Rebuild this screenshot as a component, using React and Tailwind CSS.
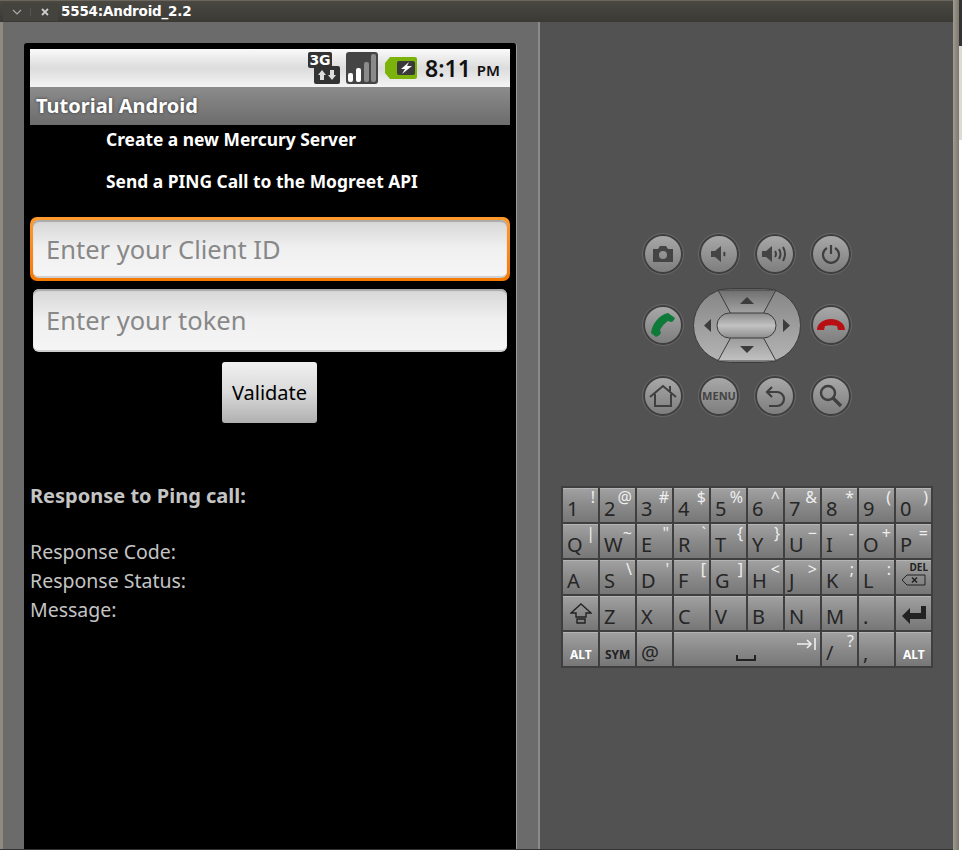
import React from 'react';

const row1 = [
  ['1', '!'], ['2', '@'], ['3', '#'], ['4', '$'], ['5', '%'], ['6', '^'], ['7', '&'], ['8', '*'], ['9', '('], ['0', ')'],
];
const row2 = [
  ['Q', '|'], ['W', '~'], ['E', '"'], ['R', '`'], ['T', '{'], ['Y', '}'], ['U', '−'], ['I', '-'], ['O', '+'], ['P', '='],
];
const row3 = [
  ['A', ''], ['S', '\\'], ['D', "'"], ['F', '['], ['G', ']'], ['H', '<'], ['J', '>'], ['K', ';'], ['L', ':'],
];
const row4 = ['Z', 'X', 'C', 'V', 'B', 'N', 'M', '.'];

const Key = ({ main, alt, className = '', children }) => (
  <div className={`relative h-[34px] bg-gradient-to-b from-[#a0a0a0] via-[#8a8a8a] to-[#777] border-t border-[#b5b5b5] font-['Noto_Sans',sans-serif] text-[#252525] ${className}`}>
    {main && <span className="absolute left-[4px] bottom-[1px] text-[20px] leading-[24px]">{main}</span>}
    {alt && <span className="absolute right-[3px] top-[-2px] text-[16px] leading-[20px] text-[#eee]">{alt}</span>}
    {children}
  </div>
);

const Round = ({ children }) => (
  <div className="w-10 h-10 rounded-full bg-gradient-to-b from-[#a8a8a8] to-[#7e7e7e] border-2 border-[#3f3f3f] outline outline-1 outline-[#686868] flex items-center justify-center">
    {children}
  </div>
);

const Field = ({ focus, label }) => (
  <div className={focus ? 'rounded-[7px] p-[3px] bg-gradient-to-b from-[#ff9a2e] to-[#f57900]' : 'p-[3px]'}>
    <div className={`${focus ? 'h-[58px]' : 'h-[63px]'} rounded-[6px] bg-gradient-to-b from-[#d6d6d6] via-[#f0f0f0] to-[#f5f5f5] border-b-2 border-[#cfcfcf] flex items-center px-[13px] pt-[2px] text-[25.5px] text-[#888] font-['Noto_Sans',sans-serif] shadow-[inset_0_2px_1px_#aaa]`}>
      {label}
    </div>
  </div>
);

const Dpad = () => (
  <svg width="108" height="75" viewBox="0 0 108 75" className="block shrink-0">
    <defs>
      <linearGradient id="pad" x1="0" y1="0" x2="0" y2="1">
        <stop offset="0" stopColor="#858585" />
        <stop offset="1" stopColor="#b5b5b5" />
      </linearGradient>
      <linearGradient id="padUp" x1="0" y1="0" x2="0" y2="1">
        <stop offset="0" stopColor="#6f6f6f" />
        <stop offset="1" stopColor="#a5a5a5" />
      </linearGradient>
      <linearGradient id="padDown" x1="0" y1="0" x2="0" y2="1">
        <stop offset="0" stopColor="#9a9a9a" />
        <stop offset="1" stopColor="#c2c2c2" />
      </linearGradient>
      <linearGradient id="pill" x1="0" y1="0" x2="0" y2="1">
        <stop offset="0" stopColor="#8b8b8b" />
        <stop offset="0.5" stopColor="#c2c2c2" />
        <stop offset="1" stopColor="#8d8d8d" />
      </linearGradient>
    </defs>
    <rect x="0.5" y="0.5" width="107" height="74" rx="37" fill="url(#pad)" stroke="#3c3c3c" />
    <path d="M25 2 H83 L70 26 H38 Z" fill="url(#padUp)" stroke="#3c3c3c" />
    <path d="M38 49 H70 L83 73 H25 Z" fill="url(#padDown)" stroke="#3c3c3c" />
    <rect x="24" y="25" width="59" height="25" rx="12.5" fill="url(#pill)" stroke="#3c3c3c" />
    <path d="M47 16 L54 9 L61 16 Z" fill="#3c3c3c" />
    <path d="M47 58 H61 L54 65 Z" fill="#3c3c3c" />
    <path d="M18 31 V44 L11 37.5 Z" fill="#3c3c3c" />
    <path d="M90 31 V44 L97 37.5 Z" fill="#3c3c3c" />
  </svg>
);

const icon = { fill: 'none', stroke: '#3f3f3f', strokeWidth: 2 };

const Controls = () => (
  <div className="grid grid-cols-[40px_40px_40px_40px] gap-x-4 gap-y-[31px] ml-[103px]">
    <Round>
      <svg width="22" height="18" viewBox="0 0 22 18">
        <path fillRule="evenodd" fill="#444" d="M1 4 H6 L8 1 H14 L16 4 H21 V17 H1 Z M11 6 A4 4 0 1 0 11 14 A4 4 0 1 0 11 6 Z" />
      </svg>
    </Round>
    <Round>
      <svg width="20" height="18" viewBox="0 0 20 18">
        <path fill="#444" d="M2 6 H6 L12 1 V17 L6 12 H2 Z" />
        <path d="M15 7 Q16 9 15 11" {...icon} />
      </svg>
    </Round>
    <Round>
      <svg width="28" height="20" viewBox="0 0 28 20">
        <path fill="#444" d="M1 7 H5 L11 2 V18 L5 13 H1 Z" />
        <path d="M14 7 Q16 10 14 13 M18 5 Q21 10 18 15 M22 3 Q26 10 22 17" {...icon} />
      </svg>
    </Round>
    <Round>
      <svg width="20" height="20" viewBox="0 0 20 20">
        <path d="M6 4 A8 8 0 1 0 14 4 M10 1 V10" {...icon} strokeWidth="2.2" />
      </svg>
    </Round>

    <Round>
      <svg width="26" height="26" viewBox="0 0 26 26">
        <path fill="#0e7a3a" d="M18 1 L25 6 C24 8 23 10 21 10 L18 9 C15 11 12 14 10 18 L11 21 C10 23 8 24 6 25 L1 21 C2 12 9 3 18 1 Z" />
      </svg>
    </Round>
    <div className="col-span-2 flex justify-center items-center h-10 -mx-[6px]">
      <Dpad />
    </div>
    <Round>
      <svg width="30" height="14" viewBox="0 0 30 14">
        <path fill="#b80f14" d="M1 12 C1 5 8 1 15 1 C22 1 29 5 29 12 L22 12 L21 8 C17 7 13 7 9 8 L8 12 Z" />
      </svg>
    </Round>

    <Round>
      <svg width="28" height="24" viewBox="0 0 28 24">
        <path d="M1 13 L14 2 L27 13 M6 10 V22 H22 V10 M21 7 V2" {...icon} />
      </svg>
    </Round>
    <Round>
      <span className="text-[11px] font-bold text-[#444] font-['Noto_Sans',sans-serif]">MENU</span>
    </Round>
    <Round>
      <svg width="22" height="24" viewBox="0 0 22 24">
        <path d="M8 3 L3 8 L8 13 M3 8 H13 A7 7 0 0 1 13 22 H5" {...icon} strokeWidth="2.2" />
      </svg>
    </Round>
    <Round>
      <svg width="24" height="24" viewBox="0 0 24 24">
        <circle cx="9" cy="9" r="7" {...icon} strokeWidth="2.4" />
        <path d="M14 14 L22 22" {...icon} strokeWidth="3.2" />
      </svg>
    </Round>
  </div>
);

const Keyboard = () => (
  <div className="mt-[70px] ml-[21px] w-[372px] h-[182px] border border-[#3f3f3f] bg-[#3f3f3f] p-[1px] grid grid-cols-[repeat(10,35px)] gap-x-[2px] gap-y-[2px] content-start">
    {row1.map(([m, a]) => <Key key={m} main={m} alt={a} />)}
    {row2.map(([m, a]) => <Key key={m} main={m} alt={a} />)}
    {row3.map(([m, a]) => <Key key={m} main={m} alt={a} />)}
    <Key>
      <span className="absolute right-[3px] top-0 text-[10px] leading-[12px] font-bold text-[#222]">DEL</span>
      <svg width="25" height="12" viewBox="0 0 25 12" className="absolute left-[5px] top-[13px]">
        <path d="M6 1 H24 V11 H6 L1 6 Z" fill="none" stroke="#222" />
        <path d="M11 3.5 L16 8.5 M16 3.5 L11 8.5" stroke="#222" strokeWidth="1.5" />
      </svg>
    </Key>
    <Key>
      <svg width="22" height="22" viewBox="0 0 22 22" className="absolute left-[7px] top-[6px]">
        <path d="M11 1 L21 10 H16 V14 H6 V10 H1 Z M7 16 H15 V20 H7 Z" fill="none" stroke="#222" strokeWidth="1.4" />
      </svg>
    </Key>
    {row4.map((m) => <Key key={m} main={m} />)}
    <Key>
      <svg width="26" height="20" viewBox="0 0 26 20" className="absolute left-[5px] top-[8px]">
        <path d="M1 11 L9 3 V8 H20 V1 H25 V14 H9 V19 Z" fill="#222" />
      </svg>
    </Key>
    <Key>
      <span className="absolute left-[7px] bottom-[4px] text-[12px] font-bold leading-[14px] text-white">ALT</span>
    </Key>
    <Key>
      <span className="absolute left-[5px] bottom-[4px] text-[12px] font-bold leading-[14px] text-[#222]">SYM</span>
    </Key>
    <Key main="@" />
    <Key className="col-span-4">
      <svg width="20" height="8" viewBox="0 0 20 8" className="absolute left-[62px] bottom-[4px]">
        <path d="M1 1 V6 H19 V1" fill="none" stroke="#222" strokeWidth="2" />
      </svg>
      <svg width="20" height="14" viewBox="0 0 20 14" className="absolute right-[3px] top-[4px]">
        <path d="M0 7 H14 M10 3 L14 7 L10 11 M18 1 V13" fill="none" stroke="#eee" strokeWidth="1.6" />
      </svg>
    </Key>
    <Key main="/" alt="?" />
    <Key main="," />
    <Key>
      <span className="absolute left-[7px] bottom-[4px] text-[12px] font-bold leading-[14px] text-white">ALT</span>
    </Key>
  </div>
);

const StatusBar = () => (
  <div className="h-[38px] bg-gradient-to-b from-[#fafafa] via-[#dcdcdc] to-[#f4f4f4] flex items-center justify-end pr-[10px]">
    <div className="relative w-8 h-8 mr-[6px]">
      <div className="absolute right-0 bottom-0 w-[26px] h-[18px] bg-[#333] rounded-[2px]">
        <svg width="26" height="18" viewBox="0 0 26 18">
          <path d="M8 4 L12 9 H10 V14 H6 V9 H4 Z M18 14 L14 9 H16 V4 H20 V9 H22 Z" fill="#ddd" />
        </svg>
      </div>
      <span className="absolute left-0 top-0 bg-[#333] rounded-[2px] w-[24px] h-[16px] text-white font-['DejaVu_Sans',sans-serif] font-bold text-[14px] leading-[16px] text-center">3G</span>
    </div>
    <svg width="32" height="32" viewBox="0 0 32 32" className="mr-[7px]">
      <rect width="32" height="32" rx="3" fill="#444" />
      <rect x="2" y="21" width="5" height="9" rx="2" fill="#fff" />
      <rect x="10" y="16" width="5" height="14" rx="2" fill="#fff" />
      <rect x="18" y="10" width="5" height="20" rx="2" fill="#8a8a8a" />
      <rect x="25" y="2" width="5" height="28" rx="2" fill="#8a8a8a" />
    </svg>
    <svg width="32" height="24" viewBox="0 0 32 24" className="mr-[8px]">
      <path d="M5 1 H30 Q32 1 32 3 V21 Q32 23 30 23 H5 L0 17 V7 Z" fill="#7cb30b" />
      <rect x="12" y="5" width="18" height="14" rx="2" fill="#3a3a3a" />
      <path d="M24 6 L16 13 H20 L17 18 L27 10 H22 Z" fill="#fff" />
    </svg>
    <span className="font-['Noto_Sans',sans-serif] font-semibold text-[23px] text-[#111] leading-none">8:11</span>
    <span className="font-['Noto_Sans',sans-serif] font-semibold text-[15px] text-[#111] ml-[6px] mt-[4px] leading-none">PM</span>
  </div>
);

export default function App() {
  return (
    <div className="w-[962px] h-[850px] overflow-hidden flex font-['Noto_Sans',sans-serif]">
      <div className="w-[953px] flex flex-col bg-[#6b6b6b]">
        <div className="h-[22px] shrink-0 flex items-center bg-gradient-to-b from-[#4a4843] to-[#3a3934] border-t border-[#6b655c] pl-[3px]">
          <div className="flex items-center w-[55px] h-[18px] bg-[#45433e] text-[#bbb]">
            <span className="w-[28px] flex justify-center border-r border-[#555]">
              <svg width="10" height="8" viewBox="0 0 10 8"><path d="M1 2 L5 6 L9 2" fill="none" stroke="#aaa" strokeWidth="1.2" /></svg>
            </span>
            <span className="w-[27px] flex justify-center">
              <svg width="10" height="10" viewBox="0 0 10 10"><path d="M2 2 L8 8 M8 2 L2 8" fill="none" stroke="#ccc" strokeWidth="1.8" /></svg>
            </span>
          </div>
          <span className="ml-[3px] text-[13.5px] font-bold text-white font-['DejaVu_Sans',sans-serif] tracking-[-0.2px]">5554:Android_2.2</span>
        </div>
        <div className="flex flex-1 min-h-0">
          <div className="w-[3px] bg-[#8f8a80]" />
          <div className="w-[537px] pl-[21px] pt-[21px] border-r-2 border-[#8a8a8a] overflow-hidden">
            <div className="w-[493px] h-[900px] bg-black rounded-t-[3px] px-[6px] pt-[6px] border-r border-[#9a9a9a]">
              <StatusBar />
              <div className="h-[38px] bg-gradient-to-b from-[#8c8c8c] to-[#6c6c6c] flex items-center pl-[6px] text-[20px] font-bold text-white [text-shadow:0_0_3px_#333]">
                Tutorial Android
              </div>
              <div className="pl-[76px] text-[17.4px] font-bold text-white leading-[42px] mt-[-7px] h-[99px]">
                <div>Create a new Mercury Server</div>
                <div>Send a PING Call to the Mogreet API</div>
              </div>
              <Field focus label="Enter your Client ID" />
              <div className="mt-[5px]"><Field label="Enter your token" /></div>
              <div className="flex justify-center mt-[7px] -ml-px">
                <div className="w-[95px] h-[61px] rounded-[3px] bg-gradient-to-b from-[#f0f0f0] via-[#dadada] to-[#b0b0b0] flex items-center justify-center text-[20px] text-black">Validate</div>
              </div>
              <div className="mt-[58px] text-[19.5px] leading-[29px] text-[#c4c4c4]">
                <div className="font-bold text-[20px]">Response to Ping call:</div>
                <div className="mt-[27px]">Response Code:</div>
                <div>Response Status:</div>
                <div>Message:</div>
              </div>
            </div>
          </div>
          <div className="w-[413px] bg-[#525252] pt-[212px]">
            <Controls />
            <Keyboard />
          </div>
        </div>
        <div className="h-px shrink-0 bg-[#333]" />
      </div>
      <div className="w-[6px] bg-gradient-to-r from-[#a09b90] to-[#7d786d]" />
      <div className="w-[3px] flex flex-col bg-white">
        <div className="h-[46px] bg-[#333]" />
        <div className="h-[94px] bg-[#dcdcd4]" />
      </div>
    </div>
  );
}
